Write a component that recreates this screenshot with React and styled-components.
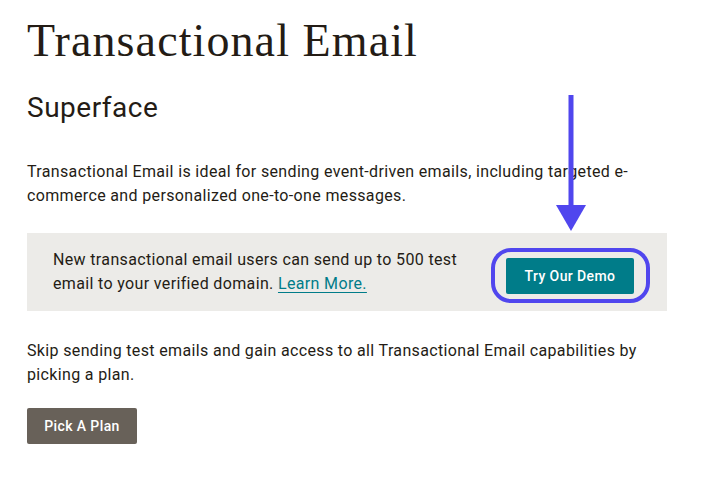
import React from 'react';
import styled, { createGlobalStyle } from 'styled-components';

const GlobalStyle = createGlobalStyle`
  body {
    margin: 0;
    background: #fff;
    font-family: Roboto, "Liberation Sans", sans-serif;
    color: #241c15;
  }
`;

const Page = styled.main`
  position: relative;
  width: 640px;
  padding: 15px 27px 40px;
`;

const Title = styled.h1`
  margin: 0;
  font-family: "Liberation Serif", serif;
  font-weight: 400;
  font-size: 46px;
  line-height: 52px;
  letter-spacing: 1.1px;
`;

const Subtitle = styled.h2`
  margin: 23px 0 0;
  font-weight: 400;
  font-size: 28px;
  line-height: 36px;
  letter-spacing: 0.5px;
`;

const Text = styled.p`
  margin: ${props => props.gap || '0'} 0 0;
  font-size: 16px;
  line-height: 24px;
  letter-spacing: 0.35px;
  color: #241c15;
`;

const Notice = styled.section`
  display: flex;
  align-items: center;
  gap: 26px;
  margin-top: 25px;
  padding: 15px 33px 15px 26px;
  background: #ecebe8;
`;

const NoticeText = styled.p`
  flex: 1;
  margin: 0;
  font-size: 16px;
  line-height: 24px;
  letter-spacing: 0.35px;
`;

const Link = styled.a`
  color: #007c89;
  text-decoration: underline;
  text-underline-offset: 3px;
  cursor: pointer;
`;

const Highlight = styled.span`
  position: relative;
  display: inline-flex;
  margin-top: 8px;

  &::after {
    content: '';
    position: absolute;
    top: -10px;
    bottom: -9px;
    left: -15px;
    right: -16px;
    border: 4px solid #5046ee;
    border-radius: 20px;
    pointer-events: none;
  }
`;

const Button = styled.button`
  width: ${props => props.width};
  height: 36px;
  margin-top: ${props => props.top || '0'};
  border: 0;
  border-radius: 2px;
  background: ${props => props.bg};
  color: #fff;
  font-family: Roboto, "Liberation Sans", sans-serif;
  font-size: 14px;
  font-weight: 500;
  letter-spacing: 0.4px;
  cursor: pointer;
`;

const Arrow = styled.svg`
  position: absolute;
  top: 95px;
  left: 556px;
`;

export default function App() {
  return (
    <>
      <GlobalStyle />
      <Page>
        <Title>Transactional Email</Title>
        <Subtitle>Superface</Subtitle>
        <Text gap="34px">
          Transactional Email is ideal for sending event-driven emails, including targeted e-commerce and
          personalized one-to-one messages.
        </Text>
        <Notice>
          <NoticeText>
            New transactional email users can send up to 500 test email to your verified domain.{' '}
            <Link>Learn More.</Link>
          </NoticeText>
          <Highlight>
            <Button width="128px" bg="#007c89">Try Our Demo</Button>
          </Highlight>
        </Notice>
        <Text gap="28px">
          Skip sending test emails and gain access to all Transactional Email capabilities by picking a plan.
        </Text>
        <Button width="110px" bg="#686159" top="21px">Pick A Plan</Button>
        <Arrow width="30" height="136" viewBox="0 0 30 136">
          <rect x="12.5" y="0" width="5" height="112" fill="#5046ee" />
          <polygon points="0,110 30,110 15,136" fill="#5046ee" />
        </Arrow>
      </Page>
    </>
  );
}
